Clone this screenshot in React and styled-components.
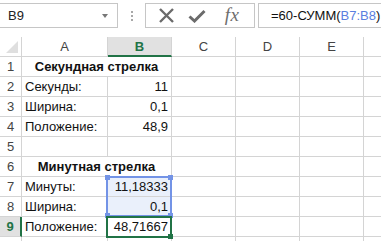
import React from "react";
import styled, { createGlobalStyle, css } from "styled-components";

const Global = createGlobalStyle`
  html, body { margin: 0; padding: 0; background: #fff; }
  body { font-family: "Liberation Sans", Arial, sans-serif; overflow: hidden; }
`;

const GRID = "#d4d4d4";
const GREEN = "#217346";
const BLUE = "#7393e6";

const Page = styled.div`
  width: 381px;
  height: 241px;
  overflow: hidden;
  position: relative;
`;

const Toolbar = styled.div`
  display: flex;
  align-items: stretch;
  height: 25px;
  padding-top: 3px;
  padding-bottom: 9px;
`;

const NameBox = styled.div`
  width: 118px;
  box-sizing: border-box;
  border: 1px solid #c6c6c6;
  border-left: none;
  display: flex;
  align-items: center;
  justify-content: space-between;
  padding: 0 9px 0 8px;
  font-size: 13px;
  color: #222;
`;

const DropArrow = styled.span`
  width: 0;
  height: 0;
  border-left: 3.5px solid transparent;
  border-right: 3.5px solid transparent;
  border-top: 4px solid #777;
  margin-top: 1px;
`;

const Dots = styled.div`
  width: 27px;
  display: flex;
  flex-direction: column;
  align-items: center;
  justify-content: center;
  gap: 2px;
  & > span {
    width: 2px;
    height: 2px;
    background: #a8a8a8;
  }
`;

const ButtonBox = styled.div`
  width: 110px;
  box-sizing: border-box;
  border: 1px solid #c6c6c6;
  display: flex;
  align-items: center;
  padding-left: 7px;
  gap: 0;
`;

const IconSlot = styled.div`
  width: ${(p) => p.$w}px;
  display: flex;
  align-items: center;
  justify-content: center;
`;

const Fx = styled.span`
  font-family: "Liberation Serif", "Times New Roman", serif;
  font-style: italic;
  font-size: 19px;
  color: #6e6e6e;
  letter-spacing: 0.5px;
  margin-top: -2px;
`;

const FormulaBox = styled.div`
  flex: 1;
  margin-left: 3px;
  box-sizing: border-box;
  border: 1px solid #c6c6c6;
  border-right: none;
  display: flex;
  align-items: center;
  padding-left: 12px;
  font-size: 13px;
  color: #111;
  white-space: nowrap;
`;

const Ref = styled.span`
  color: #5a7ee0;
`;

const Sheet = styled.div`
  display: grid;
  grid-template-columns: 22px 86px 64px 64px 64px 64px 64px;
  grid-auto-rows: 20px;
  font-size: 13px;
  color: #111;
  position: relative;
`;

const Corner = styled.div`
  border-right: 1px solid ${GRID};
  border-bottom: 1px solid ${GRID};
  background: #fff;
  position: relative;
  &::after {
    content: "";
    position: absolute;
    right: 3px;
    bottom: 3px;
    width: 0;
    height: 0;
    border-left: 12px solid transparent;
    border-bottom: 12px solid #dfdfdf;
  }
`;

const ColHead = styled.div`
  border-right: 1px solid ${GRID};
  border-bottom: 1px solid ${GRID};
  display: flex;
  align-items: center;
  justify-content: center;
  color: #444;
  background: #fff;
  ${(p) =>
    p.$active &&
    css`
      background: #e1e1e1;
      color: ${GREEN};
      font-weight: bold;
      border-bottom: 2px solid ${GREEN};
    `}
`;

const RowHead = styled.div`
  border-right: 1px solid ${GRID};
  border-bottom: 1px solid ${GRID};
  display: flex;
  align-items: center;
  justify-content: center;
  color: #444;
  ${(p) =>
    p.$active &&
    css`
      background: #e1e1e1;
      color: ${GREEN};
      font-weight: bold;
      border-right: 2px solid ${GREEN};
    `}
`;

const Cell = styled.div`
  border-right: 1px solid ${GRID};
  border-bottom: 1px solid ${GRID};
  display: flex;
  align-items: center;
  padding: 0 3px;
  white-space: nowrap;
  overflow: visible;
  min-width: 0;
  justify-content: ${(p) => (p.$align === "right" ? "flex-end" : p.$align === "center" ? "center" : "flex-start")};
  ${(p) => p.$span && css`grid-column: span ${p.$span};`}
  ${(p) => p.$bold && css`font-weight: bold;`}
  ${(p) => p.$fill && css`background: #eaf0fb;`}
`;

const RefBox = styled.div`
  position: absolute;
  left: 106px;
  top: 139px;
  width: 66px;
  height: 41px;
  box-sizing: border-box;
  border: 2px solid ${BLUE};
  pointer-events: none;
`;

const Handle = styled.span`
  position: absolute;
  width: 5px;
  height: 5px;
  background: ${(p) => p.$color};
  ${(p) => (p.$v === "top" ? "top: -3px;" : "bottom: -3px;")}
  ${(p) => (p.$h === "left" ? "left: -3px;" : "right: -3px;")}
`;

const ActiveBox = styled.div`
  position: absolute;
  left: 106px;
  top: 179px;
  width: 66px;
  height: 22px;
  box-sizing: border-box;
  border: 2px solid ${GREEN};
  pointer-events: none;
`;

const XIcon = () => (
  <svg width="17" height="17" viewBox="0 0 17 17">
    <path d="M2 2 L15 15 M15 2 L2 15" stroke="#6b6b6b" strokeWidth="2.4" strokeLinecap="butt" fill="none" />
  </svg>
);

const CheckIcon = () => (
  <svg width="18" height="14" viewBox="0 0 18 14">
    <path d="M1.5 7.5 L6.5 12 L16.5 2" stroke="#6b6b6b" strokeWidth="3" fill="none" strokeLinejoin="miter" />
  </svg>
);

const rows = [
  { n: 1, merged: "Секундная стрелка" },
  { n: 2, a: "Секунды:", b: "11" },
  { n: 3, a: "Ширина:", b: "0,1" },
  { n: 4, a: "Положение:", b: "48,9" },
  { n: 5 },
  { n: 6, merged: "Минутная стрелка" },
  { n: 7, a: "Минуты:", b: "11,18333", fill: true },
  { n: 8, a: "Ширина:", b: "0,1", fill: true },
  { n: 9, a: "Положение:", b: "48,71667", active: true },
  { n: 10, hideNum: true },
];

const cols = ["A", "B", "C", "D", "E", ""];

export default function App() {
  return (
    <Page>
      <Global />
      <Toolbar>
        <NameBox>
          <span>B9</span>
          <DropArrow />
        </NameBox>
        <Dots>
          <span />
          <span />
          <span />
        </Dots>
        <ButtonBox>
          <IconSlot $w={26}>
            <XIcon />
          </IconSlot>
          <IconSlot $w={36}>
            <CheckIcon />
          </IconSlot>
          <IconSlot $w={34}>
            <Fx>fx</Fx>
          </IconSlot>
        </ButtonBox>
        <FormulaBox>
          =60-СУММ(<Ref>B7:B8</Ref>)
        </FormulaBox>
      </Toolbar>
      <Sheet>
        <Corner />
        {cols.map((c, i) => (
          <ColHead key={i} $active={c === "B"}>
            {c}
          </ColHead>
        ))}
        {rows.map((r) => (
          <React.Fragment key={r.n}>
            <RowHead $active={r.active}>{r.hideNum ? "" : r.n}</RowHead>
            {r.merged ? (
              <Cell $span={2} $align="center" $bold>
                {r.merged}
              </Cell>
            ) : (
              <>
                <Cell>{r.a}</Cell>
                <Cell $align="right" $fill={r.fill}>
                  {r.b}
                </Cell>
              </>
            )}
            <Cell />
            <Cell />
            <Cell />
            <Cell />
          </React.Fragment>
        ))}
        <RefBox>
          <Handle $color={BLUE} $v="top" $h="left" />
          <Handle $color={BLUE} $v="top" $h="right" />
          <Handle $color={BLUE} $v="bottom" $h="left" />
          <Handle $color={BLUE} $v="bottom" $h="right" />
        </RefBox>
        <ActiveBox>
          <Handle $color={GREEN} $v="bottom" $h="right" />
        </ActiveBox>
      </Sheet>
    </Page>
  );
}
